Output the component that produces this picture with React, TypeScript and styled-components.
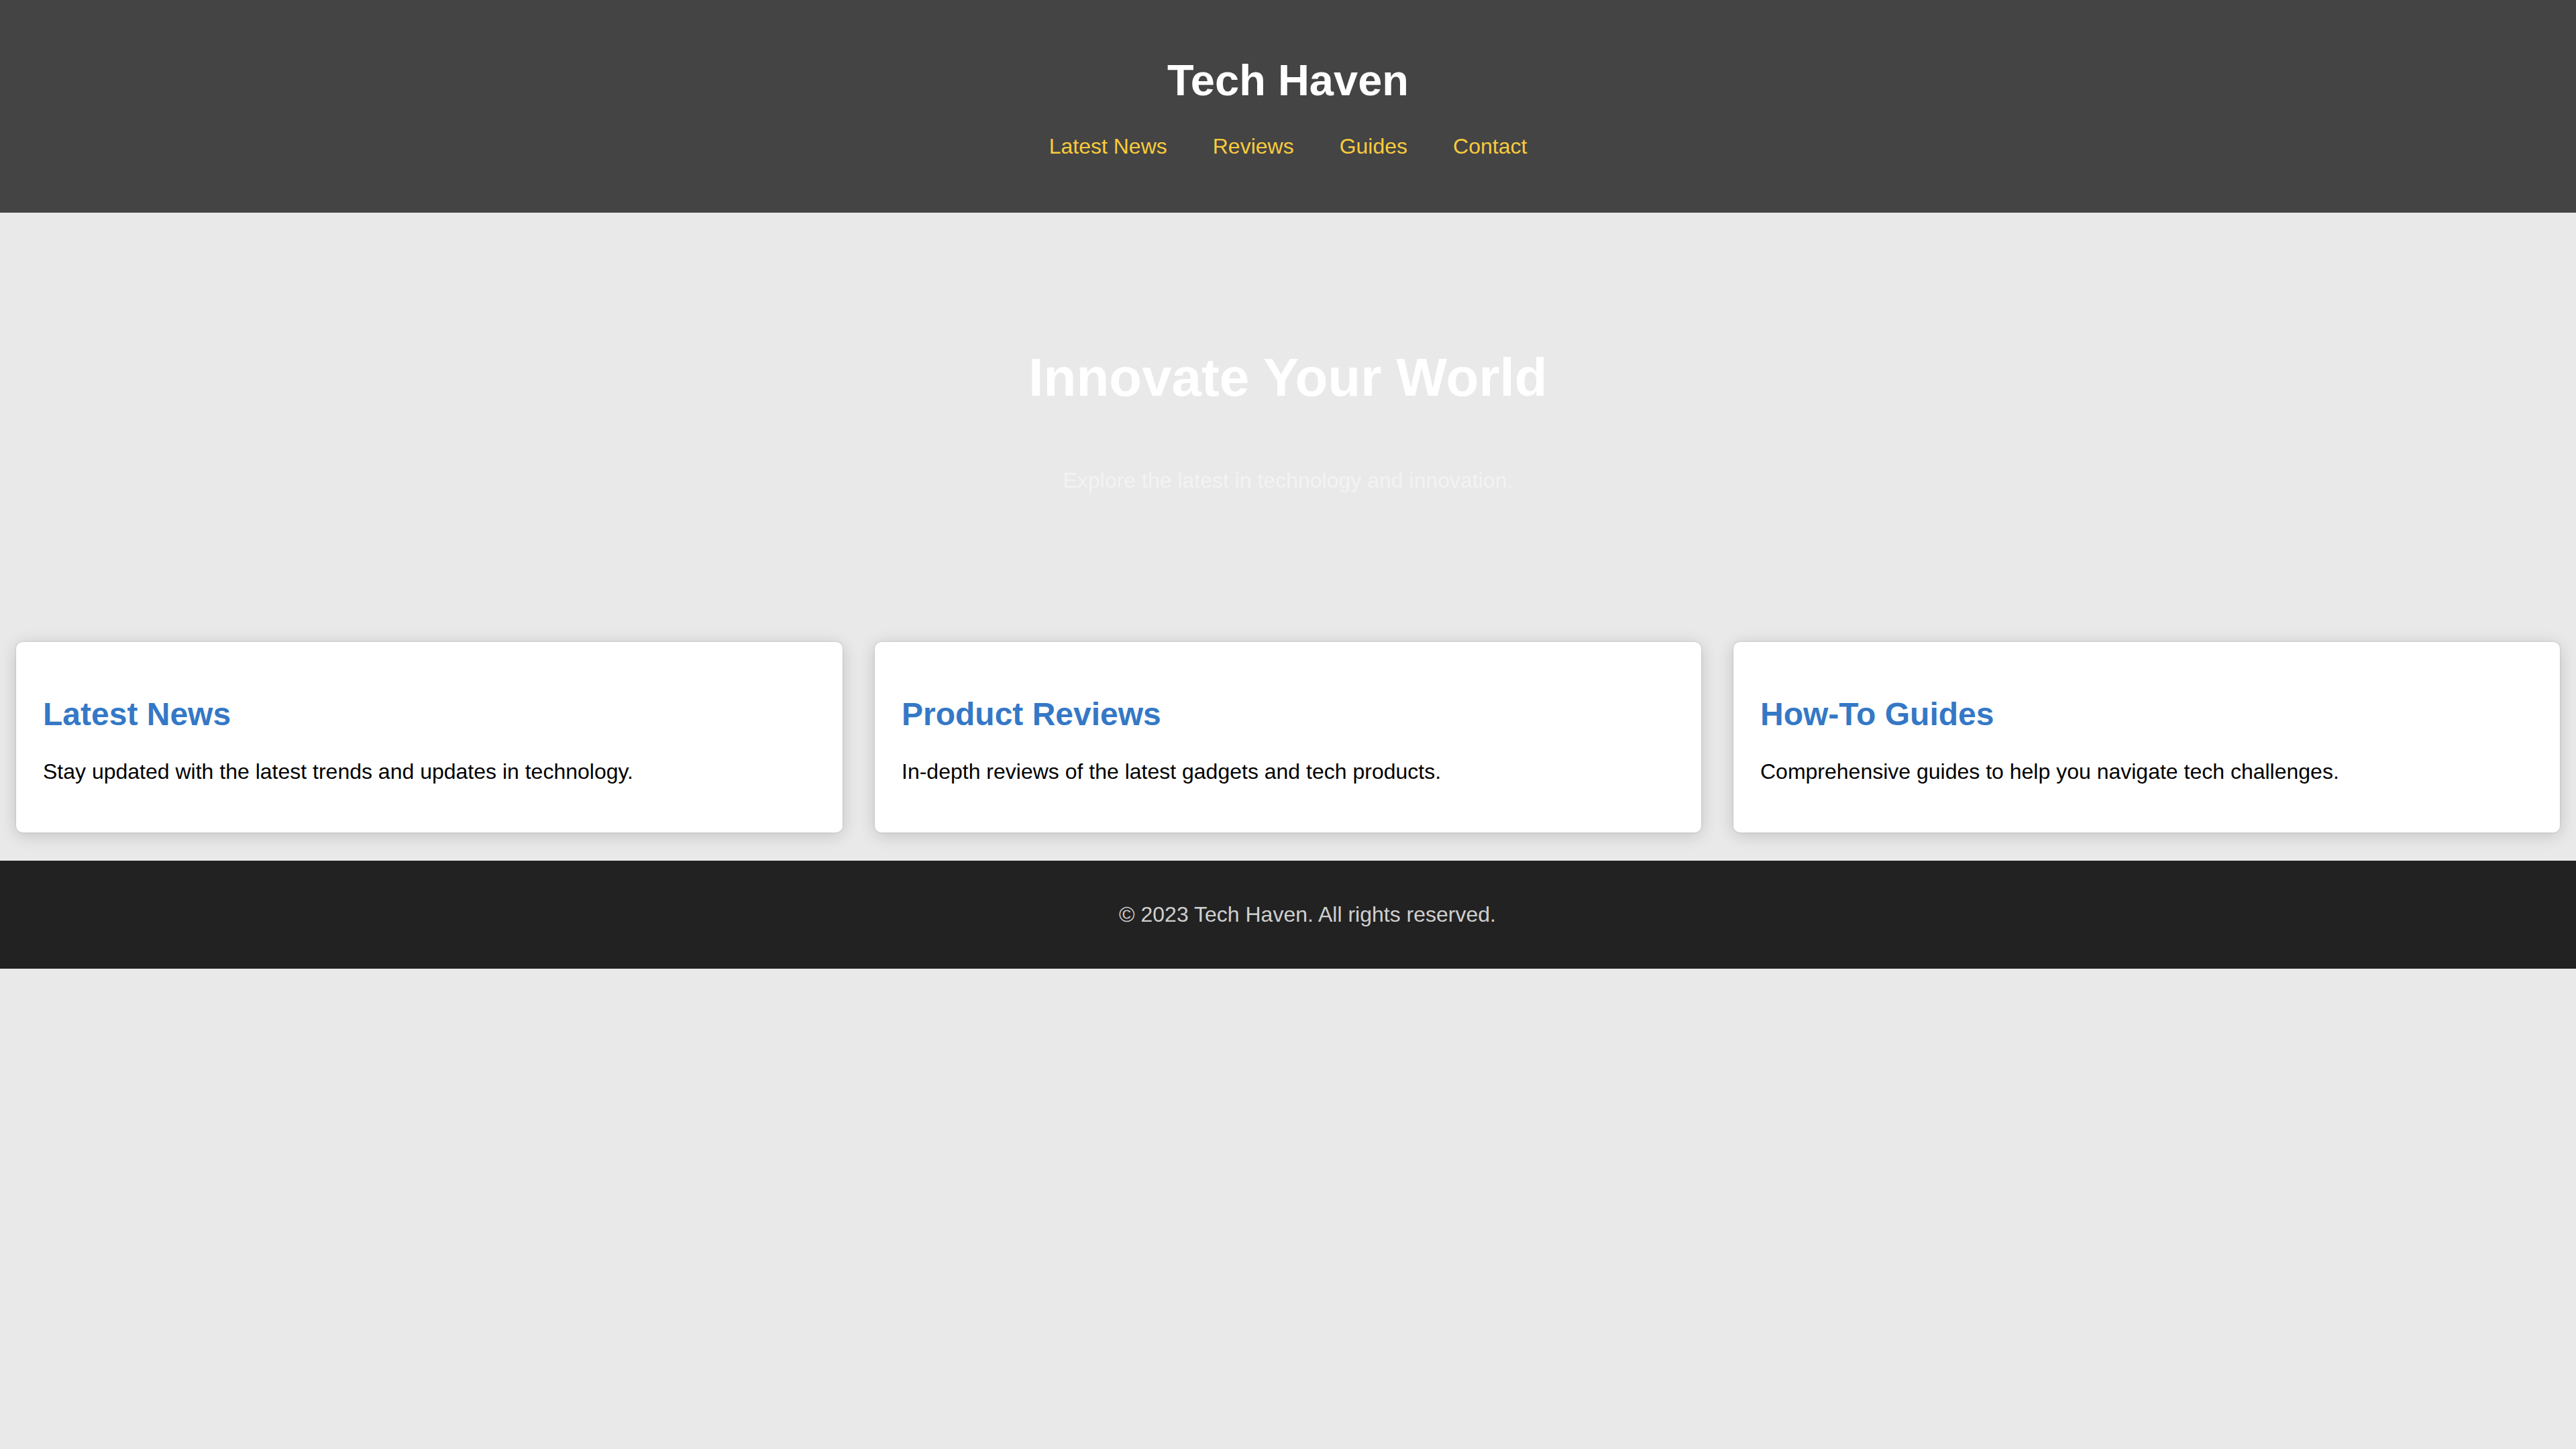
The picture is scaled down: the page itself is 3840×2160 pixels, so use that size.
import React from "react";
import styled, { createGlobalStyle } from "styled-components";

const GlobalStyle = createGlobalStyle`
  html, body {
    margin: 0;
    padding: 0;
    background: #e9e9e9;
    font-family: "Liberation Sans", Arial, Helvetica, sans-serif;
    overflow: hidden;
  }
`;

const Header = styled.header`
  background: #444444;
  padding: 82px 0 80px;
  text-align: center;
`;

const SiteTitle = styled.h1`
  margin: 0;
  font-size: 65px;
  font-weight: bold;
  color: #ffffff;
  line-height: normal;
`;

const Nav = styled.nav`
  margin-top: 43px;
  display: flex;
  justify-content: center;
  gap: 68px;
`;

const NavLink = styled.a`
  font-size: 32px;
  line-height: normal;
  color: #f8cb3c;
  text-decoration: none;
`;

const Hero = styled.section`
  padding: 200px 0 198px;
  text-align: center;
`;

const HeroTitle = styled.h2`
  margin: 0;
  font-size: 80px;
  font-weight: bold;
  color: #ffffff;
  line-height: normal;
`;

const HeroText = styled.p`
  margin: 89px 0 0;
  font-size: 32px;
  line-height: normal;
  color: #f3f3f3;
`;

const Cards = styled.section`
  display: grid;
  grid-template-columns: repeat(3, 1fr);
  gap: 48px;
  padding: 24px 24px 42px;
`;

const Card = styled.article`
  background: #ffffff;
  border-radius: 10px;
  padding: 40px;
  box-shadow: 0 4px 24px rgba(0, 0, 0, 0.17), 0 0 3px rgba(0, 0, 0, 0.15);
`;

const CardTitle = styled.h3`
  margin: 40px 0;
  font-size: 48px;
  font-weight: bold;
  color: #3478c6;
  line-height: normal;
`;

const CardText = styled.p`
  margin: 0 0 32px;
  font-size: 32px;
  line-height: normal;
  color: #000000;
`;

const Footer = styled.footer`
  background: #222222;
  padding: 62px 0 62px 58px;
  text-align: center;
`;

const FooterText = styled.p`
  margin: 0;
  font-size: 32px;
  line-height: normal;
  color: #cfcfcf;
`;

const links = ["Latest News", "Reviews", "Guides", "Contact"];

const cards = [
  {
    title: "Latest News",
    text: "Stay updated with the latest trends and updates in technology.",
  },
  {
    title: "Product Reviews",
    text: "In-depth reviews of the latest gadgets and tech products.",
  },
  {
    title: "How-To Guides",
    text: "Comprehensive guides to help you navigate tech challenges.",
  },
];

function App() {
  return (
    <>
      <GlobalStyle />
      <Header>
        <SiteTitle>Tech Haven</SiteTitle>
        <Nav>
          {links.map((l) => (
            <NavLink key={l} href="#">
              {l}
            </NavLink>
          ))}
        </Nav>
      </Header>
      <Hero>
        <HeroTitle>Innovate Your World</HeroTitle>
        <HeroText>Explore the latest in technology and innovation.</HeroText>
      </Hero>
      <Cards>
        {cards.map((c) => (
          <Card key={c.title}>
            <CardTitle>{c.title}</CardTitle>
            <CardText>{c.text}</CardText>
          </Card>
        ))}
      </Cards>
      <Footer>
        <FooterText>© 2023 Tech Haven. All rights reserved.</FooterText>
      </Footer>
    </>
  );
}

export default App;
